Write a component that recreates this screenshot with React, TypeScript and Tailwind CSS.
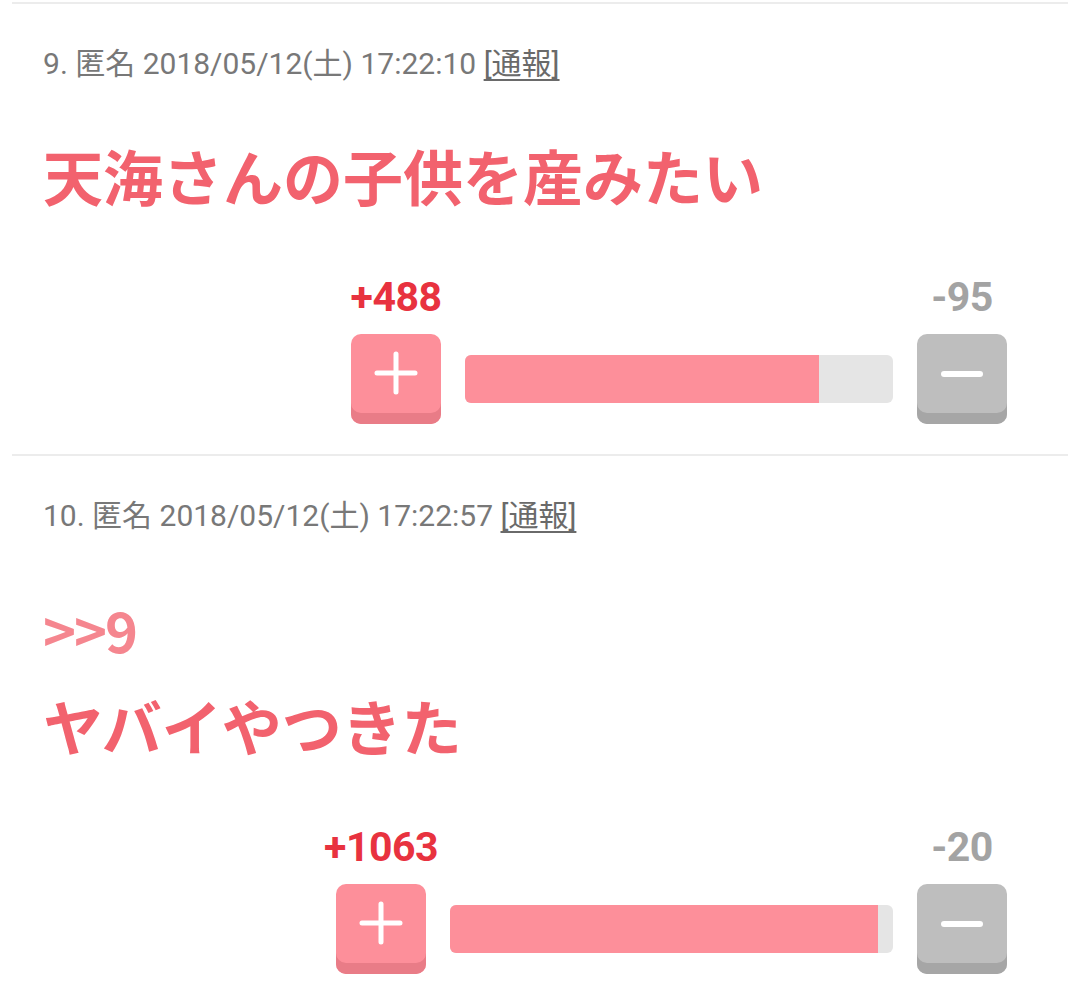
import React from 'react';

type Post = {
  no: number;
  date: string;
  anchor?: string;
  body: string;
  plus: number;
  minus: number;
  fill: number;
  barWidth: string;
};

const posts: Post[] = [
  {
    no: 9,
    date: '2018/05/12(土) 17:22:10',
    body: '天海さんの子供を産みたい',
    plus: 488,
    minus: 95,
    fill: 82.7,
    barWidth: 'w-[428px]',
  },
  {
    no: 10,
    date: '2018/05/12(土) 17:22:57',
    anchor: '>>9',
    body: 'ヤバイやつきた',
    plus: 1063,
    minus: 20,
    fill: 96.6,
    barWidth: 'w-[443px]',
  },
];

const PlusIcon = () => (
  <svg width="44" height="44" viewBox="0 0 44 44">
    <path d="M22 3v38M3 22h38" stroke="#fff" strokeWidth="5" strokeLinecap="round" />
  </svg>
);

const MinusIcon = () => (
  <svg width="44" height="8" viewBox="0 0 44 8">
    <rect x="1" y="1" width="42" height="6" rx="3" fill="#fff" />
  </svg>
);

const VoteRow = ({ post }: { post: Post }) => (
  <div className="flex justify-end items-end gap-6 pr-[61px] mt-[58px]">
    {/* good */}
    <div className="w-[90px] flex flex-col items-center">
      <div className="whitespace-nowrap font-['Roboto',sans-serif] font-bold text-[41px] leading-[48px] tracking-[-0.5px] text-[#e8323f]">
        +{post.plus}
      </div>
      <button className="mt-[13px] w-[90px] h-[90px] rounded-[10px] bg-[#fd8f9a] shadow-[inset_0_-11px_0_#e97c87] flex justify-center pt-[17px]">
        <PlusIcon />
      </button>
    </div>

    <div className={`${post.barWidth} h-[90px] flex items-center`}>
      <div className="w-full h-[48px] rounded-md bg-[#e5e5e5] overflow-hidden">
        <div className="h-full bg-[#fd8f9a]" style={{ width: `${post.fill}%` }} />
      </div>
    </div>

    {/* bad */}
    <div className="w-[90px] flex flex-col items-center">
      <div className="whitespace-nowrap font-['Roboto',sans-serif] font-bold text-[41px] leading-[48px] tracking-[-0.5px] text-[#a3a3a3]">
        -{post.minus}
      </div>
      <button className="mt-[13px] w-[90px] h-[90px] rounded-[10px] bg-[#bebebe] shadow-[inset_0_-11px_0_#a6a6a6] flex justify-center pt-[36px]">
        <MinusIcon />
      </button>
    </div>
  </div>
);

export default function App() {
  return (
    <div className="min-h-screen bg-white pt-[2px] overflow-hidden">
      {posts.map((post) => (
        <div key={post.no} className="mx-3 border-t-2 border-[#ececec] pb-[30px]">
          <div className="pl-[31px] pt-10 font-['Roboto','Noto_Sans_CJK_JP',sans-serif] text-[30px] leading-[40px] text-[#787878] whitespace-nowrap">
            {post.no}. 匿名 {post.date}{' '}
            <span className="underline decoration-2 underline-offset-[5px] text-[#6a6a6a]">[通報]</span>
          </div>
          <div className="pl-[31px] font-['Noto_Sans_CJK_JP',sans-serif] font-bold text-[60px] leading-[80px]">
            {post.anchor ? (
              <>
                <div className="mt-[53px] text-[56px] tracking-[-2px] text-[#f5868f]">{post.anchor}</div>
                <div className="mt-4 text-[#f2626e]">{post.body}</div>
              </>
            ) : (
              <div className="mt-[51px] text-[#f2626e]">{post.body}</div>
            )}
          </div>
          <VoteRow post={post} />
        </div>
      ))}
    </div>
  );
}
